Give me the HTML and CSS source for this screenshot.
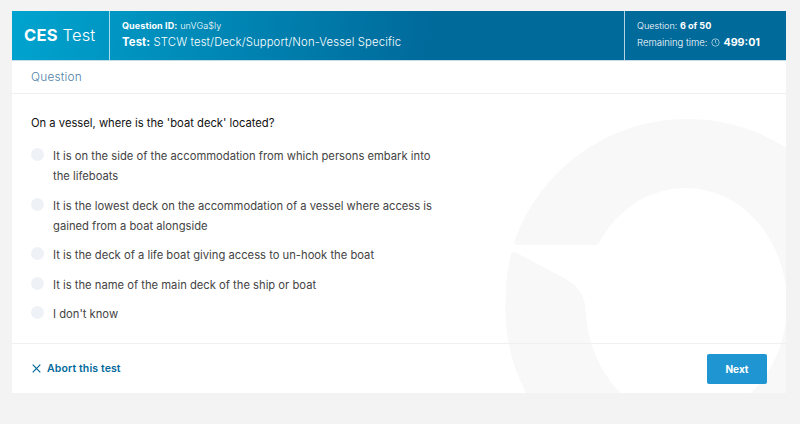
FILE: index.html
```
<!DOCTYPE html>
<html lang="en">
<head>
    <meta charset="UTF-8">
    <meta name="viewport" content="width=device-width, initial-scale=1.0">
    <title>CES Test</title>
    <link rel="stylesheet" href="styles.css">
</head>
<body>
    <div class="container">
        <svg class="watermark" viewBox="500 111 286 282" aria-hidden="true">
            <path d="M517 245 Q513.500 244.500 514.500 241 A183 183 0 0 1 686.500 119 A183 183 0 0 1 802 445 L751 445 L751 393 A101 116 0 0 0 787 304 A101 116 0 0 0 686 188 A101 116 0 0 0 600 241 Q598 245 596 245 Z"/>
            <path d="M526 393 A183 183 0 0 1 505.500 302 Q505.500 276 511 254 Q512 251 516 252.500 L566 279 Q585 290 585.500 310 Q588 358 620 393 Z"/>
        </svg>

        <header class="header">
            <div class="logo"><b>CES</b> Test</div>
            <div class="test-info">
                <div class="question-id"><b>Question ID:</b> <span>unVGa$ly</span></div>
                <div class="test-name"><b>Test:</b> <span>STCW test/Deck/Support/Non-Vessel Specific</span></div>
            </div>
            <div class="progress">
                <div class="counter"><span>Question:</span> <b>6 of 50</b></div>
                <div class="remaining">
                    <span>Remaining time:</span>
                    <svg class="clock" viewBox="0 0 9 9"><circle cx="4.500" cy="4.500" r="3.700"/><path d="M4.500 1.800V4.700L5.500 5.500"/></svg>
                    <b>499:01</b>
                </div>
            </div>
        </header>

        <h1 class="section-title"><span>Question</span></h1>

        <form class="question">
            <p class="question-text">On a vessel, where is the 'boat deck' located?</p>
            <label class="option"><input type="radio" name="answer"><span>It is on the side of the accommodation from which persons embark into<br>the lifeboats</span></label>
            <label class="option"><input type="radio" name="answer"><span>It is the lowest deck on the accommodation of a vessel where access is<br>gained from a boat alongside</span></label>
            <label class="option"><input type="radio" name="answer"><span>It is the deck of a life boat giving access to un-hook the boat</span></label>
            <label class="option"><input type="radio" name="answer"><span>It is the name of the main deck of the ship or boat</span></label>
            <label class="option"><input type="radio" name="answer"><span>I don't know</span></label>
        </form>

        <footer class="footer">
            <a class="abort" href="#">
                <svg viewBox="0 0 9 9"><path d="M0.700 0.700L8.300 8.300M8.300 0.700L0.700 8.300"/></svg>
                <span>Abort this test</span>
            </a>
            <button class="next" type="button">Next</button>
        </footer>
    </div>
</body>
</html>
```
FILE: styles.css
```
* {
    box-sizing: border-box;
}
body {
    margin: 0;
    padding: 11px 14px 0 12px;
    background-color: #f3f3f3;
    font-family: Inter, "Liberation Sans", sans-serif;
    color: #444;
}
.container {
    position: relative;
    height: 382px;
    background-color: white;
    display: flex;
    flex-direction: column;
}
.watermark {
    position: absolute;
    right: 0;
    bottom: 0;
    width: 286px;
    height: 282px;
    fill: #f8f8f8;
}
.header {
    height: 50px;
    display: flex;
    color: white;
    background: linear-gradient(100deg, #00a4cf 0%, #006a9b 54%);
    border-bottom: 1px solid #c5dde8;
    font-weight: 300;
    white-space: nowrap;
}
.header b {
    font-weight: 700;
}
.logo {
    width: 98px;
    padding-left: 12px;
    line-height: 49px;
    font-size: 16.5px;
    letter-spacing: 0.2px;
    border-right: 1px solid #a5dcec;
}
.test-info {
    flex: 1;
    padding: 8px 0 0 12px;
}
.question-id {
    font-size: 9px;
    line-height: 14px;
    letter-spacing: 0.12px;
}
.test-name {
    font-size: 11.3px;
    line-height: 18px;
    letter-spacing: 0.13px;
}
.progress {
    width: 162px;
    padding: 8px 0 0 12px;
    border-left: 1px solid #b5d4e2;
}
.counter {
    font-size: 9.1px;
    line-height: 14px;
}
.remaining {
    display: flex;
    align-items: center;
    font-size: 9.5px;
    line-height: 19px;
}
.remaining b {
    margin-left: 3px;
    font-size: 10.7px;
}
.clock {
    width: 9px;
    height: 9px;
    margin-left: 4px;
    fill: none;
    stroke: #b8d8e6;
    stroke-width: 0.8;
}
.section-title {
    height: 33px;
    margin: 0;
    padding-left: 19px;
    border-bottom: 1px solid #edf0f2;
    color: #4d7fa8;
    font-size: 11.8px;
    font-weight: 300;
    letter-spacing: 0.25px;
    line-height: 32px;
}
.question {
    position: relative;
    height: 249px;
    padding: 19px 19px 0;
    font-size: 11.22px;
    line-height: 20px;
}
.question-text {
    margin: 0 0 13px;
    color: #111;
}
.option {
    display: flex;
    margin-bottom: 9.6px;
}
.option input {
    flex: none;
    appearance: none;
    width: 13px;
    height: 13px;
    margin: 2px 9px 0 0;
    border-radius: 50%;
    background-color: #eef2f6;
}
.footer {
    position: relative;
    flex: 1;
    display: flex;
    align-items: center;
    justify-content: space-between;
    padding: 0 19px;
    border-top: 1px solid #eff0f2;
}
.abort {
    display: flex;
    align-items: center;
    color: #00689a;
    font-size: 10.5px;
    font-weight: 600;
    letter-spacing: 0.12px;
    text-decoration: none;
}
.abort svg {
    width: 9px;
    height: 9px;
    margin: 0 6px 0 1px;
    fill: none;
    stroke: #00689a;
    stroke-width: 1.2;
}
.next {
    width: 60px;
    height: 30px;
    padding: 0;
    border: none;
    border-radius: 2px;
    background-color: #1f96d1;
    color: white;
    font-family: inherit;
    font-size: 10px;
    font-weight: 700;
}
```
